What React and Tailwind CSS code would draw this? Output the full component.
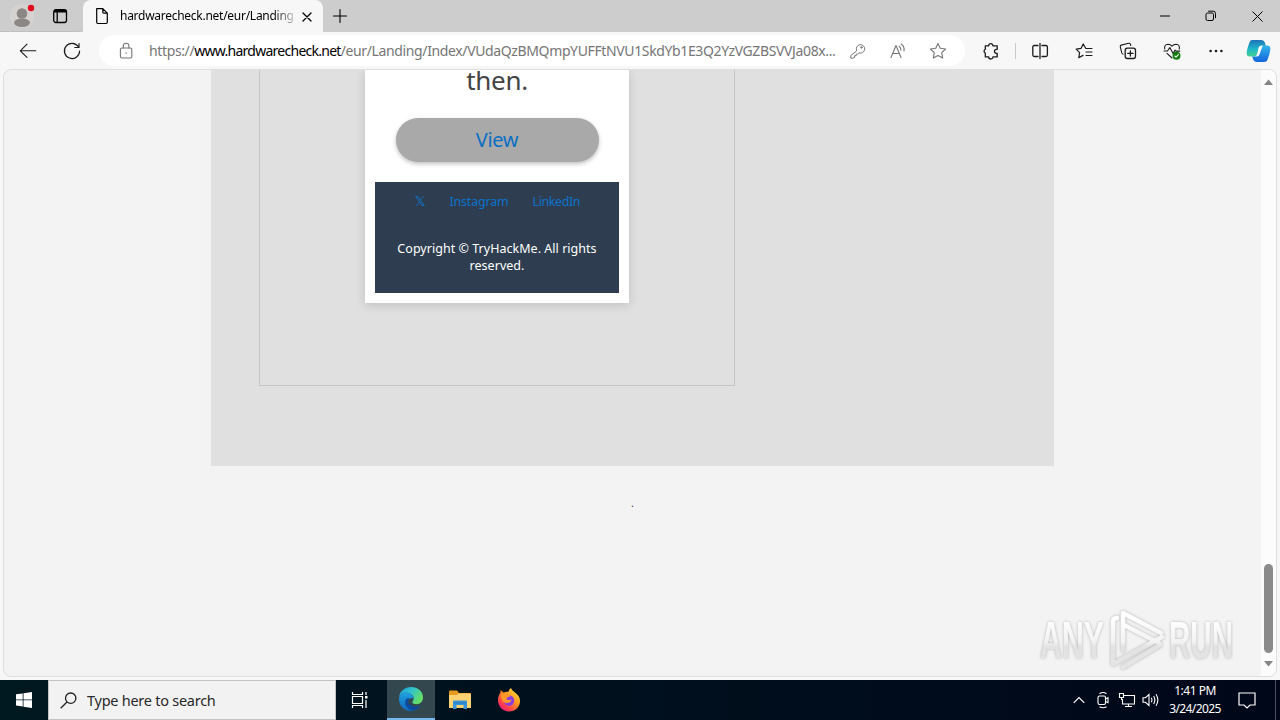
const LINKS = [
  { label: "𝕏", className: "w-[11px] text-[14px] font-['DejaVu_Sans']" },
  { label: "Instagram", className: "w-[59px] tracking-[-0.2px]" },
  { label: "LinkedIn", className: "w-[47px] tracking-[-0.4px]" },
];

function Icon({ size = 20, className = "", children }) {
  return (
    <svg
      width={size}
      height={size}
      viewBox="0 0 20 20"
      fill="none"
      stroke="currentColor"
      strokeWidth="1.1"
      strokeLinecap="round"
      strokeLinejoin="round"
      className={`shrink-0 ${className}`}
    >
      {children}
    </svg>
  );
}

function Cell({ className = "w-11", children }) {
  return <div className={`flex h-full shrink-0 items-center justify-center ${className}`}>{children}</div>;
}

function TabStrip() {
  return (
    <div className="flex h-8 shrink-0 bg-[#cdcdcd] text-black">
      <div className="flex w-[83px] rounded-br-md border-b border-[#c0c0c0]">
        <Cell className="w-[44px]">
          <svg width="28" height="28" viewBox="0 0 28 28">
            <circle cx="14" cy="14" r="12" fill="#d5d2d0" />
            <circle cx="14" cy="11.5" r="5.3" fill="#8b8784" />
            <ellipse cx="14" cy="20.8" rx="8" ry="4.2" fill="#8b8784" />
            <circle cx="23" cy="6" r="3.2" fill="#e00b1c" />
          </svg>
        </Cell>
        <Cell className="w-8">
          <Icon>
            <rect x="3.7" y="3.7" width="12.8" height="12.8" rx="2.2" strokeWidth="1.3" />
            <path d="M4 5.2h12.4" strokeWidth="2.6" strokeLinecap="butt" />
            <path d="M7.2 6v10" strokeWidth="1.3" />
          </Icon>
        </Cell>
      </div>
      <div className="flex h-8 w-[240px] items-center rounded-t-lg bg-[#f7f7f7] pl-[9px]">
        <Icon>
          <path d="M4.7 2.6h6.1l4.5 4.5v9.2q0 1.2-1.2 1.2H5.9q-1.2 0-1.2-1.2zM10.8 2.8v3.3q0 1 1 1h3.3" strokeWidth="1.2" />
        </Icon>
        <div className="ml-2 w-[174px] bg-gradient-to-r from-black from-88% to-[#00000030] bg-clip-text text-[12px] leading-4 tracking-[-0.27px] whitespace-nowrap text-transparent">
          hardwarecheck.net/eur/Landing/
        </div>
        <Icon size={16} className="ml-[5px] mt-px">
          <path d="M5 5l10 10M15 5L5 15" strokeWidth="1.6" />
        </Icon>
      </div>
      <Cell className="w-[34px]">
        <Icon><path d="M10 3.5v13M3.5 10h13" /></Icon>
      </Cell>
      <div className="ml-auto flex">
        <Cell className="w-[46px]">
          <svg width="10" height="2"><path d="M0 1h10" stroke="black" /></svg>
        </Cell>
        <Cell className="w-[46px]">
          <svg width="12" height="12" viewBox="0 0 12 12" fill="none" stroke="black">
            <rect x="1" y="3" width="7.5" height="7.5" rx="1.5" />
            <path d="M3.2 1.2h5q2.3 0 2.3 2.3v4.7" />
          </svg>
        </Cell>
        <Cell className="w-[46px]">
          <svg width="11" height="11" stroke="black"><path d="M.5.5l10 10M10.5.5l-10 10" /></svg>
        </Cell>
      </div>
    </div>
  );
}

function Toolbar() {
  return (
    <div className="flex h-[37px] shrink-0 items-center bg-[#f7f7f7] pl-1.5 text-[#1c1c1c]">
      <Cell>
        <Icon><path d="M17.8 9.8H2.5M9 3.2L2.3 9.8 9 16.4" /></Icon>
      </Cell>
      <Cell>
        <Icon><path d="M16.4 5.8A7.6 7.6 0 1 0 17.6 10M17 2.7v3.8h-4.2" strokeWidth="1.2" /></Icon>
      </Cell>
      <div className="ml-[5px] flex h-[31px] w-[866px] shrink-0 items-center rounded-full bg-white pl-[5px] text-[#757575]">
        <Cell>
          <Icon>
            <rect x="4.4" y="7" width="11.4" height="10" rx="1.6" />
            <path d="M7.3 7V5a2.8 2.8 0 0 1 5.6 0v2" />
            <circle cx="10.1" cy="12" r=".8" fill="currentColor" stroke="none" />
          </Icon>
        </Cell>
        <div className="ml-px w-[689px] text-[14px] leading-5 tracking-[-0.37px] whitespace-nowrap text-[#767676]">
          https://<span className="tracking-[-0.74px] text-black">www.hardwarecheck.net</span>
          /eur/Landing/Index/VUdaQzBMQmpYUFFtNVU1SkdYb1E3Q2YzVGZBSVVJa08x...
        </div>
        <Cell className="w-10">
          <Icon size={18}>
            <path d="M8.4 9.4A4.7 4.7 0 1 1 11 12L9.5 13.5H8v1.7H6.2v2L4 18H2v-2.6z" />
            <circle cx="13.8" cy="6" r=".9" />
          </Icon>
        </Cell>
        <Cell className="w-10">
          <Icon>
            <path d="M3 16.5L8 4.5l5 12M4.8 12.5h6.5M11.2 5.2q2 1.5 1.6 4M13.2 3q3.5 2.4 2.8 7" />
          </Icon>
        </Cell>
        <Cell className="w-10">
          <Icon><path d="M10 2.4l2.3 4.9 5.3.7-3.9 3.7 1 5.3-4.7-2.6-4.7 2.6 1-5.3L2.4 8l5.3-.7z" /></Icon>
        </Cell>
      </div>
      <Cell className="ml-1 w-11">
        <Icon>
          <path d="M4.3 4.8h3.4a2.1 2.1 0 0 1 4.2 0h4.3v3.5h-.7a2 2 0 0 0 0 4h.7v3.6h-4.3a2.1 2.1 0 0 1-4.2 0H4.3v-3.8a2 2 0 0 1 0-3.7z" strokeWidth="1.3" />
        </Icon>
      </Cell>
      <div className="mx-[2px] mr-px h-4 w-px bg-[#c8c8c8]" />
      <Cell className="w-[45px]">
        <Icon><path d="M8 4.5H4.3q-1.5 0-1.5 1.5v8q0 1.5 1.5 1.5H8M12 4.5h3.9q1.5 0 1.5 1.5v8q0 1.5-1.5 1.5H12M10 2.5v15" strokeWidth="1.3" /></Icon>
      </Cell>
      <Cell>
        <Icon>
          <path d="M11.7 7.2L9.2 3 7 7.4l-4.8.8 3.4 3.5-.8 5L9 14.4M12 7.5h6M12 11h6M12 14.5h6" strokeWidth="1.2" />
        </Icon>
      </Cell>
      <Cell>
        <Icon>
          <path d="M5.2 13.2q-1-.2-1.4-1.3L2.3 5.8q-.3-1.3 1-1.7l7.3-1.8q1.3-.2 1.8.9l.4 1.3" />
          <rect x="7.2" y="7.2" width="10.3" height="10.3" rx="2.2" strokeWidth="1.3" />
          <path d="M12.4 9.8v5.2M9.8 12.4H15" strokeWidth="1.3" />
        </Icon>
      </Cell>
      <Cell>
        <Icon>
          <path d="M2.7 8Q2 3.4 6 3.2q2.2 0 4 2 1.8-2 4-2 4 .2 3.3 4.8M5 12.4l5 4.6M2 10h3.5L7.8 6.5l3.3 6 2-3.4 1 1h3.7" />
          <circle cx="14.5" cy="14.8" r="4" fill="#107c10" stroke="none" />
          <path d="M12.8 15l1.2 1.1 2.4-2.5" stroke="white" />
        </Icon>
      </Cell>
      <Cell>
        <Icon>
          <g fill="currentColor" stroke="none">
            <circle cx="4.6" cy="10" r="1.3" />
            <circle cx="10" cy="10" r="1.3" />
            <circle cx="15.4" cy="10" r="1.3" />
          </g>
        </Icon>
      </Cell>
      <Cell className="w-10">
        <svg width="25" height="24" viewBox="0 0 25 24">
          <defs>
            <linearGradient id="copilotLeft" x1="0" y1="0" x2="0" y2="1">
              <stop offset="0" stopColor="#1d72b8" />
              <stop offset=".55" stopColor="#1eb8c9" />
              <stop offset="1" stopColor="#45cf8e" />
            </linearGradient>
            <linearGradient id="copilotRight" x1="0" y1="0" x2="0" y2="1">
              <stop offset="0" stopColor="#33b5ec" />
              <stop offset="1" stopColor="#1565dc" />
            </linearGradient>
          </defs>
          <path d="M6 1h9q3 0 4 3l.8 3h-4q-2 0-3 3l-1.5 5q-.7 2.5-3 2.5H4q-4 0-3.3-4.2Q1.3 9 3.2 4 4 1 6 1z" fill="url(#copilotLeft)" />
          <path d="M19 6.5h2q4 0 3.3 4.3-.5 4-2.4 9-1 3.2-4 3.2H11q-3 0-4-3l-.8-2.5h2q2.3 0 3-2.5L13 9q.8-2.5 3-2.5z" fill="url(#copilotRight)" />
          <path d="M12.6 8.6q.8-2.1 3.2-2.1h1l-3.5 9.3q-.6 1.7-2.6 1.7H8.6q2-.3 2.6-2.5z" fill="white" />
        </svg>
      </Cell>
    </div>
  );
}

function EmailCard() {
  return (
    <div className="flex h-[233px] w-[264px] flex-col items-center bg-white text-center shadow-[0_2px_10px_rgba(0,0,0,0.15)]">
      <p className="h-5 text-[26px] leading-5 tracking-[-0.3px] text-[#444]">then.</p>
      <button className="mt-7 h-11 w-[203px] rounded-[22px] bg-[#a9a9a9] text-[20px] leading-none tracking-[-0.3px] text-[#0b6fc4] shadow-[0_2px_4px_rgba(0,0,0,0.25)]">
        View
      </button>
      <div className="mt-5 h-[111px] w-[244px] bg-[#2e3e50] pt-[11px] text-[13px] leading-[17px]">
        <div className="flex justify-center gap-[24px] text-[12.5px] text-[#0c72cc]">
          {LINKS.map((link) => (
            <span key={link.label} className={`whitespace-nowrap ${link.className}`}>{link.label}</span>
          ))}
        </div>
        <p className="mt-[30px] text-[12.5px] tracking-[0.03px] whitespace-nowrap text-white">
          Copyright © TryHackMe. All rights
          <br />
          reserved.
        </p>
      </div>
    </div>
  );
}

function Watermark() {
  return (
    <svg className="absolute right-[36px] bottom-0 overflow-visible" width="204" height="68" viewBox="0 0 204 68">
      <defs>
        <linearGradient id="markFill" gradientUnits="userSpaceOnUse" x1="0" y1="4" x2="0" y2="64">
          <stop offset=".1" stopColor="#ffffff" />
          <stop offset=".5" stopColor="#f2f2f2" />
          <stop offset=".58" stopColor="#e2e2e2" />
          <stop offset="1" stopColor="#e6e6e6" />
        </linearGradient>
      </defs>
      <g
        fill="url(#markFill)"
        fontFamily="Liberation Sans"
        fontWeight="bold"
        fontSize="52"
        style={{ filter: "drop-shadow(0 0 1.5px #b4b4b4)" }}
      >
        <text x="4" y="50" textLength="64" lengthAdjust="spacingAndGlyphs">ANY</text>
        <text x="133" y="50" textLength="64" lengthAdjust="spacingAndGlyphs">RUN</text>
      </g>
      <path
        d="M81 10q-4 0-4 4v42L126 29M87 42V5l38 20M88 17l35 18M87 59l37-22"
        fill="none"
        stroke="url(#markFill)"
        strokeWidth="4.5"
        strokeLinejoin="round"
        strokeLinecap="round"
        style={{ filter: "drop-shadow(0 0 1.5px #b0b0b0)" }}
      />
    </svg>
  );
}

function PageView() {
  return (
    <div className="relative mx-[3px] flex h-[608px] shrink-0 overflow-hidden rounded-lg border border-[#dedede] bg-[#f3f3f3]">
      <div className="flex-1">
        <div className="ml-[207px] h-[396px] w-[843px] bg-[#e0e0e0] pl-12">
          <div className="flex h-[316px] w-[476px] justify-center border border-t-0 border-[#c6c6c6]">
            <EmailCard />
          </div>
        </div>
        <p className="mt-[29px] ml-[207px] w-[843px] text-center text-[11px] leading-4 text-[#444]">.</p>
      </div>
      <div className="flex w-[15px] flex-col items-center bg-[#fcfcfc]">
        <svg className="mt-[9px] shrink-0" width="9" height="6"><path d="M0 6l4.5-5.5L9 6z" fill="#858585" /></svg>
        <div className="mt-[479px] h-[89px] w-[9px] shrink-0 rounded-full bg-[#8b8b8b]" />
        <svg className="mt-2 shrink-0" width="9" height="6"><path d="M0 0l4.5 5.5L9 0z" fill="#858585" /></svg>
      </div>
      <Watermark />
    </div>
  );
}

function Taskbar() {
  return (
    <div className="flex h-10 shrink-0 bg-gradient-to-r from-[#001820] to-[#000719] text-white">
      <Cell className="w-12">
        <svg width="16" height="16" viewBox="0 0 16 16" fill="white">
          <path d="M0 2.3l6.7-.9v6.1H0zM7.5 1.3L16 0v7.5H7.5zM0 8.3h6.7v6.2L0 13.6zM7.5 8.3H16V16l-8.5-1.3z" />
        </svg>
      </Cell>
      <div className="flex h-10 w-72 items-center border border-[#c4c4c4] bg-[#f2f2f2] pl-[11px] text-[#292929]">
        <svg width="17" height="17" viewBox="0 0 17 17" fill="none" stroke="#222" strokeWidth="1.3">
          <circle cx="10.7" cy="6.2" r="5.2" />
          <path d="M7 10L.7 16.3" />
        </svg>
        <span className="ml-[10px] text-[14.5px] leading-5 tracking-[-0.26px]">Type here to search</span>
      </div>
      <Cell className="w-12">
        <svg width="18" height="18" viewBox="0 0 18 18" fill="none" stroke="white" strokeWidth="1.2">
          <path d="M1.5 1v2.5h10V1M1.5 17v-2.5h10V17M1.5 5.5h10v7h-10zM15 1v3M15 9v8" />
          <path d="M14 5h2.5v2.5H14z" fill="white" stroke="none" />
        </svg>
      </Cell>
      <div className="ml-[3px] flex h-10 w-12 items-center justify-center border-b-2 border-[#76b9ed] bg-[#33474f]">
        <svg width="26" height="26" viewBox="0 0 26 26">
          <defs>
            <linearGradient id="edgeTop" x1="0" y1="0" x2="1" y2=".5">
              <stop offset="0" stopColor="#1a96d8" />
              <stop offset=".5" stopColor="#30c3cf" />
              <stop offset="1" stopColor="#65df65" />
            </linearGradient>
            <linearGradient id="edgeSide" x1="0" y1="0" x2="0" y2="1">
              <stop offset="0" stopColor="#1fa1e0" />
              <stop offset="1" stopColor="#1167bd" />
            </linearGradient>
          </defs>
          <path d="M1 12C1.5 5 6.7 1 13 1c7 0 12 4.6 12 10.5 0 4-3 6.7-6.5 6.7-3 0-4.5-1.3-4.2-2.3.4-1 1.4-1.7 1.4-3.6C15.7 9 12 6.5 8 6.8 4 7.2 1.3 9.5 1 12z" fill="url(#edgeTop)" />
          <path d="M1 13C1 9 5 6.7 8.5 6.8c4 0 7.2 2.5 7.2 5.7-1-1-5-.7-5.7 2.5C9 20 15 24 22 19.3 20 23 16.5 25 13 25 6 25 1 19.8 1 13z" fill="url(#edgeSide)" />
          <path d="M8.8 12.5c-3.3 3-2 9.5 4.7 11.8 4 .5 7-2 8.5-5-5 3-10.4.5-11.6-2.7-.7-1.8 0-3.2 1-4.3-1-.3-1.9-.2-2.6.2z" fill="#0c4a9c" />
        </svg>
      </div>
      <Cell className="w-[50px]">
        <svg width="22" height="20" viewBox="0 0 22 20">
          <path d="M0 1.5Q0 .5 1 .5h7l2 2.5h11q1 0 1 1V8H0z" fill="#e59b20" />
          <path d="M0 5h8l1.5-1.5H21q1 0 1 1V18H0z" fill="#fbd373" />
          <path d="M4 11.5q0-1 1-1h12q1 0 1 1v7.5h-3.5v-4h-7v4H4z" fill="#3995d7" />
          <path d="M5 13h12" stroke="#2576b8" />
        </svg>
      </Cell>
      <Cell className="w-12">
        <svg width="24" height="24" viewBox="0 0 24 24">
          <defs>
            <linearGradient id="foxBody" x1="1" y1="0" x2=".2" y2="1">
              <stop offset="0" stopColor="#fff04a" />
              <stop offset=".45" stopColor="#ff9a20" />
              <stop offset=".8" stopColor="#ff3d4d" />
              <stop offset="1" stopColor="#e6188b" />
            </linearGradient>
          </defs>
          <path d="M1 12c0-3 1-5.5 2.5-7.5V2l3 2.5q2-1 5-.8Q12 1 14 0q.5 2.5 4 4.5C21.5 7 23 9.5 23 13c0 6-4.8 10.5-11 10.5S1 18.5 1 12z" fill="url(#foxBody)" />
          <circle cx="12" cy="12.5" r="5.2" fill="#8b3de0" />
          <path d="M4 6q4-1.5 6 .7l3.3.8c.3 1.6-3.6 1.4-3.8 3-.2 1.7 3 2 5 .9-.5 4-6 5-9 1.5Q4 10 4 6z" fill="#ff9828" />
        </svg>
      </Cell>
      <div className="ml-auto flex">
        <Cell className="w-6">
          <svg width="12" height="8" fill="none" stroke="white" strokeWidth="1.2"><path d="M.7 6.8L6 1.5l5.3 5.3" /></svg>
        </Cell>
        <Cell className="w-6">
          <svg width="14" height="18" viewBox="0 0 14 18" fill="none" stroke="white" strokeWidth="1.1">
            <rect x="2" y="5" width="7.5" height="8.5" rx="1.5" />
            <path d="M9.5 8l2.5-1.3v5L9.5 10.5M3.5 2.7q3.5-2.3 7 0M3.5 15.8q3.5 2 7 0" />
          </svg>
        </Cell>
        <Cell className="w-6">
          <svg width="18" height="16" viewBox="0 0 18 16" fill="none" stroke="white" strokeWidth="1.1">
            <path d="M6 3.5h10.5v8.5H4.5V7M10.5 12v2.5M7 14.5h7" />
            <path d="M1.5 1.5h4v4h-4zM3.5 5.5V8" />
          </svg>
        </Cell>
        <Cell className="w-6">
          <svg width="18" height="16" viewBox="0 0 18 16" fill="none" stroke="white" strokeWidth="1.1">
            <path d="M1 5.7h2.5L7 2.5v11L3.5 10.3H1zM9.3 5.7q1.3 2.3 0 4.6M11.6 4q2.5 4 0 8M14 2.3q3.7 5.7 0 11.4" />
          </svg>
        </Cell>
        <div className="flex w-[64px] flex-col items-center pt-[2px] text-[12px] leading-[18px] whitespace-nowrap">
          <span className="tracking-[-0.5px]">1:41 PM</span>
          <span className="tracking-[-0.6px]">3/24/2025</span>
        </div>
        <Cell className="w-[40px]">
          <svg width="18" height="17" viewBox="0 0 18 17" fill="none" stroke="white" strokeWidth="1.2">
            <path d="M1 1h16v12h-5l-3 3-3-3H1z" />
          </svg>
        </Cell>
        <div className="ml-[8px] h-10 w-px bg-[#4b5360]" />
        <div className="w-1" />
      </div>
    </div>
  );
}

export default function App() {
  return (
    <div className="flex h-[720px] w-[1280px] flex-col overflow-hidden bg-[#f7f7f7] font-['Noto_Sans','Open_Sans',sans-serif]">
      <TabStrip />
      <Toolbar />
      <PageView />
      <div className="h-[3px] shrink-0 bg-[#f7f7f7]" />
      <Taskbar />
    </div>
  );
}
